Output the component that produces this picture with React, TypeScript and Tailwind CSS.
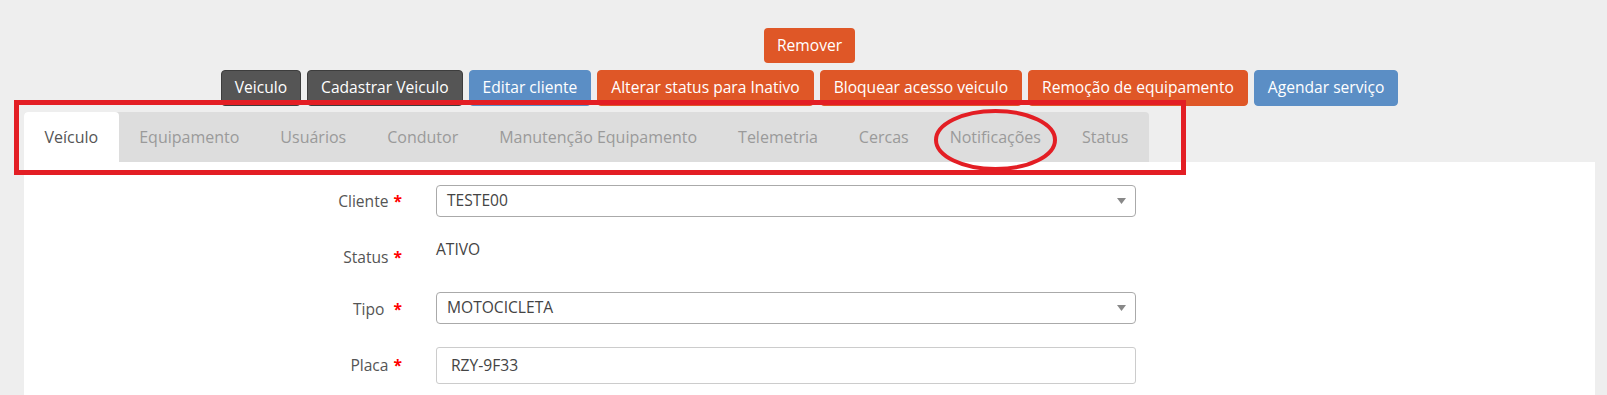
import React from 'react';

const font = { fontFamily: '"Open Sans", "Noto Sans", sans-serif' };

type Btn = { label: string; kind: 'dark' | 'blue' | 'orange' };

const actions: Btn[] = [
  { label: 'Veiculo', kind: 'dark' },
  { label: 'Cadastrar Veiculo', kind: 'dark' },
  { label: 'Editar cliente', kind: 'blue' },
  { label: 'Alterar status para Inativo', kind: 'orange' },
  { label: 'Bloquear acesso veiculo', kind: 'orange' },
  { label: 'Remoção de equipamento', kind: 'orange' },
  { label: 'Agendar serviço', kind: 'blue' },
];

const tabs = [
  'Veículo',
  'Equipamento',
  'Usuários',
  'Condutor',
  'Manutenção Equipamento',
  'Telemetria',
  'Cercas',
  'Notificações',
  'Status',
];

function ActionButton({ label, kind }: Btn) {
  const color =
    kind === 'dark'
      ? 'bg-[#555555] border-[#3d3d3d]'
      : kind === 'blue'
      ? 'bg-[#5b8ec5] border-[#5b8ec5]'
      : 'bg-[#df5727] border-[#df5727]';
  return (
    <button className={`h-[36px] px-[13px] rounded-[4px] border text-white text-[15.6px] leading-none ${color}`}>
      {label}
    </button>
  );
}

function Required() {
  return <span className="text-[#ff0000] font-bold ml-[5px]">*</span>;
}

function SelectBox({ value }: { value: string }) {
  return (
    <div className="w-[700px] h-[32px] border border-[#aaaaaa] rounded-[4px] bg-white flex items-center justify-between pl-[10px] pr-[9px]">
      <span className="text-[#444]">{value}</span>
      <svg width="9" height="6" viewBox="0 0 9 6">
        <path d="M0 0 L9 0 L4.5 6 Z" fill="#888" />
      </svg>
    </div>
  );
}

export default function App() {
  return (
    <div style={font} className="relative min-h-[395px] bg-[#eeeeee] overflow-hidden flex flex-col">
      <div className="ml-[24px] mr-[12px] pt-[28px] flex flex-col items-center gap-[7px]">
        <button className="h-[35px] px-[13px] rounded-[4px] bg-[#df5727] text-white text-[15.6px] leading-none">
          Remover
        </button>
        <div className="flex gap-[6px]">
          {actions.map((a) => (
            <ActionButton key={a.label} {...a} />
          ))}
        </div>
      </div>

      <div className="ml-[24px] mr-[12px] mt-[6px] flex-1 flex flex-col">
        <div className="flex w-fit h-[50px] bg-[#dddddd] rounded-t-[4px]">
          {tabs.map((t, i) => (
            <div
              key={t}
              className={`px-[20.5px] flex items-center text-[16px] ${
                i === 0 ? 'bg-white text-[#555] rounded-t-[4px]' : 'text-[#9a9a9a]'
              }`}
            >
              {t}
            </div>
          ))}
        </div>

        <div className="flex-1 bg-white pt-[23px] text-[15.6px]">
          <div className="flex items-center">
            <div className="w-[378px] text-right text-[#555] pt-[2px]">
              Cliente<Required />
            </div>
            <div className="ml-[34px]">
              <SelectBox value="TESTE00" />
            </div>
          </div>

          <div className="flex items-start mt-[19px] h-[38px]">
            <div className="w-[378px] text-right text-[#555] pt-[10px]">
              Status<Required />
            </div>
            <div className="ml-[34px] pt-[2px] text-[#444]">ATIVO</div>
          </div>

          <div className="flex items-center mt-[18px]">
            <div className="w-[378px] text-right text-[#555] pt-[4px]">
              Tipo&nbsp;<Required />
            </div>
            <div className="ml-[34px]">
              <SelectBox value="MOTOCICLETA" />
            </div>
          </div>

          <div className="flex items-center mt-[23px]">
            <div className="w-[378px] text-right text-[#555]">
              Placa<Required />
            </div>
            <div className="ml-[34px] w-[700px] h-[37px] border border-[#cccccc] rounded-[3px] flex items-center pl-[14px] text-[#444]">
              RZY-9F33
            </div>
          </div>
        </div>
      </div>

      {/* annotation overlay */}
      <div className="absolute left-[14px] top-[100px] w-[1172px] h-[75px] border-[5px] border-[#e31e24] pointer-events-none" />
      <svg className="absolute left-[933px] top-[108px] pointer-events-none" width="125" height="64" viewBox="0 0 125 64">
        <ellipse cx="62.5" cy="32" rx="59.5" ry="29" fill="none" stroke="#e31e24" strokeWidth="4" />
      </svg>
    </div>
  );
}
